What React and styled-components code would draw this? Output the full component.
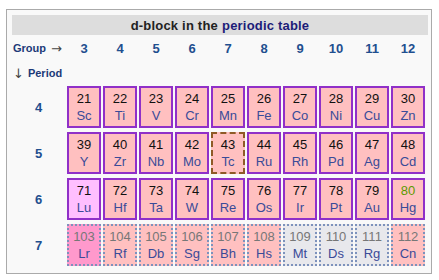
import styled, { createGlobalStyle, css } from 'styled-components';

const GlobalStyle = createGlobalStyle`
    html, body {
        margin: 0;
        padding: 0;
        background: #fff;
        font-family: "Liberation Sans", Arial, sans-serif;
    }
`;

const Box = styled.div`
    box-sizing: border-box;
    margin: 9px 0 0 6px;
    width: 426px;
    height: 265px;
    border: 1px solid #aaa;
    background: #f9f9f9;
    padding: 5px 3px 6px 5px;
    display: flex;
    flex-direction: column;
`;

const Title = styled.div`
    height: 20px;
    background: #ddd;
    display: flex;
    align-items: center;
    justify-content: center;
    font-size: 13px;
    font-weight: bold;
    color: #222;
    letter-spacing: 0.2px;
`;

const TitleLink = styled.span`
    color: #1c1c78;
    margin-left: 4px;
`;

const Table = styled.div`
    display: grid;
    grid-template-columns: 53px repeat(10, 34px);
    column-gap: 2px;
`;

const HeadRow = styled.div`
    display: contents;
`;

const HeadLabel = styled.div`
    height: ${({ $h }) => $h}px;
    display: flex;
    align-items: center;
    padding-left: 1px;
    font-size: 11px;
    font-weight: bold;
    color: #1c3a78;
    white-space: nowrap;
`;

const Arrow = styled.span`
    font-family: "DejaVu Sans", sans-serif;
    font-size: 13px;
    font-weight: normal;
    margin: ${({ $after }) => ($after ? '0 0 0 5px' : '0 4px 0 0')};
    color: #444;
`;

const GroupNum = styled.div`
    display: flex;
    align-items: center;
    justify-content: center;
    font-size: 13px;
    font-weight: bold;
    color: #1f4f8f;
`;

const Rows = styled.div`
    margin-top: 1px;
    display: grid;
    grid-template-columns: 53px repeat(10, 34px);
    grid-auto-rows: 42px;
    column-gap: 2px;
    row-gap: 4px;
`;

const PeriodNum = styled(GroupNum)``;

const borders = {
    solid: css`border: 2px solid #9030c8;`,
    dashed: css`border: 2px dashed #8f5a26;`,
    dotted: css`border: 2px dotted #7d92bc;`
};

const Cell = styled.div`
    box-sizing: border-box;
    ${({ $border }) => borders[$border]}
    background: ${({ $bg }) => $bg};
    display: flex;
    flex-direction: column;
    align-items: center;
    justify-content: center;
    font-size: 13px;
    line-height: 17px;
`;

const Num = styled.span`
    color: ${({ $color }) => $color};
`;

const Sym = styled.span`
    color: #3a4b98;
`;

const PINK = '#ffc0c0';

const periods = [
    {
        n: 4,
        cells: [
            [21, 'Sc'], [22, 'Ti'], [23, 'V'], [24, 'Cr'], [25, 'Mn'],
            [26, 'Fe'], [27, 'Co'], [28, 'Ni'], [29, 'Cu'], [30, 'Zn']
        ]
    },
    {
        n: 5,
        cells: [
            [39, 'Y'], [40, 'Zr'], [41, 'Nb'], [42, 'Mo'], [43, 'Tc', { border: 'dashed' }],
            [44, 'Ru'], [45, 'Rh'], [46, 'Pd'], [47, 'Ag'], [48, 'Cd']
        ]
    },
    {
        n: 6,
        cells: [
            [71, 'Lu', { bg: '#ffbfff' }], [72, 'Hf'], [73, 'Ta'], [74, 'W'], [75, 'Re'],
            [76, 'Os'], [77, 'Ir'], [78, 'Pt'], [79, 'Au'], [80, 'Hg', { color: '#5c9a00' }]
        ]
    },
    {
        n: 7,
        row: { border: 'dotted', color: '#777' },
        cells: [
            [103, 'Lr', { bg: '#ff99cc' }], [104, 'Rf'], [105, 'Db'], [106, 'Sg'], [107, 'Bh'],
            [108, 'Hs'], [109, 'Mt', { bg: '#e8e8ec' }], [110, 'Ds', { bg: '#e8e8ec' }],
            [111, 'Rg', { bg: '#e8e8ec' }], [112, 'Cn']
        ]
    }
];

const groups = [3, 4, 5, 6, 7, 8, 9, 10, 11, 12];

export default function App() {
    return (
        <>
            <GlobalStyle />
            <Box>
                <Title>
                    d-block in the<TitleLink>periodic table</TitleLink>
                </Title>
                <Table>
                    <HeadRow>
                        <HeadLabel $h={26}>
                            Group<Arrow $after>→</Arrow>
                        </HeadLabel>
                        {groups.map((g) => (
                            <GroupNum key={g}>{g}</GroupNum>
                        ))}
                    </HeadRow>
                    <HeadRow>
                        <HeadLabel $h={24}>
                            <Arrow>↓</Arrow>Period
                        </HeadLabel>
                    </HeadRow>
                </Table>
                <Rows>
                    {periods.map((p) => (
                        <HeadRow key={p.n}>
                            <PeriodNum>{p.n}</PeriodNum>
                            {p.cells.map(([num, sym, opt = {}]) => (
                                <Cell
                                    key={num}
                                    $border={opt.border || (p.row && p.row.border) || 'solid'}
                                    $bg={opt.bg || PINK}
                                >
                                    <Num $color={opt.color || (p.row && p.row.color) || '#111'}>{num}</Num>
                                    <Sym>{sym}</Sym>
                                </Cell>
                            ))}
                        </HeadRow>
                    ))}
                </Rows>
            </Box>
        </>
    );
}
